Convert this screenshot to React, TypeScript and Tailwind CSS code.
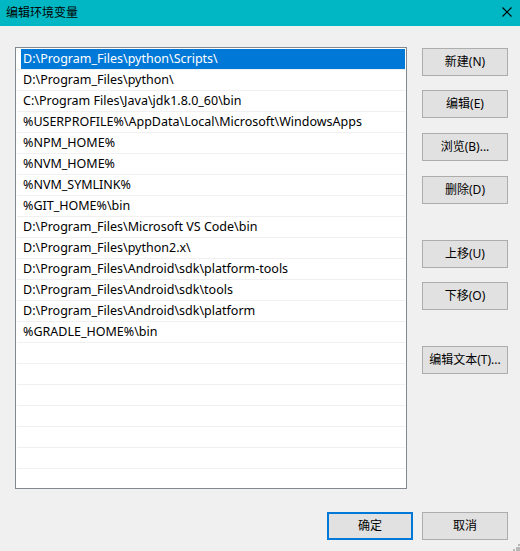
import React from "react";

const items = [
  "D:\\Program_Files\\python\\Scripts\\",
  "D:\\Program_Files\\python\\",
  "C:\\Program Files\\Java\\jdk1.8.0_60\\bin",
  "%USERPROFILE%\\AppData\\Local\\Microsoft\\WindowsApps",
  "%NPM_HOME%",
  "%NVM_HOME%",
  "%NVM_SYMLINK%",
  "%GIT_HOME%\\bin",
  "D:\\Program_Files\\Microsoft VS Code\\bin",
  "D:\\Program_Files\\python2.x\\",
  "D:\\Program_Files\\Android\\sdk\\platform-tools",
  "D:\\Program_Files\\Android\\sdk\\tools",
  "D:\\Program_Files\\Android\\sdk\\platform",
  "%GRADLE_HOME%\\bin",
];

const rows = [...items, ...Array(7).fill("")];

const font = { fontFamily: '"Noto Sans", "Noto Sans CJK SC", sans-serif' };

function Btn({ label, className = "", primary = false }: { label: string; className?: string; primary?: boolean }) {
  return (
    <div
      className={
        "w-[86px] h-[28px] flex items-center justify-center bg-[#e1e1e1] text-[12px] text-black " +
        (primary ? "border-2 border-[#0078d7] " : "border border-[#adadad] ") +
        className
      }
    >
      {label}
    </div>
  );
}

export default function App() {
  return (
    <div className="relative w-[520px] h-[551px] bg-[#f0f0f0] flex flex-col overflow-hidden" style={font}>
      <div className="h-[26px] bg-[#00b7c3] flex items-center justify-between pl-[6px] pr-[8px]">
        <span className="text-[12px] text-black">编辑环境变量</span>
        <svg width="10" height="10" viewBox="0 0 10 10" className="mb-[2px]">
          <path d="M0.5 0.5 L9.5 9.5 M9.5 0.5 L0.5 9.5" stroke="#000" strokeWidth="1.1" />
        </svg>
      </div>
      <div className="flex pt-[21px] pl-[15px]">
        <div className="w-[392px] h-[442px] border border-[#828790] bg-white p-[1px] overflow-hidden">
          {rows.map((t, i) => (
            <div key={i} className="h-[21px] pl-[1px] border-b border-[#f0f0f0] flex">
              <div
                className={
                  "flex-1 ml-[3px] h-[20px] flex items-center pl-[2px] text-[12.5px] whitespace-nowrap " +
                  (i === 0 ? "bg-[#0078d7] text-white" : "text-black")
                }
              >
                {t}
              </div>
            </div>
          ))}
        </div>
        <div className="ml-[15px] pt-[1px] flex flex-col">
          <Btn label="新建(N)" />
          <Btn label="编辑(E)" className="mt-[14px]" />
          <Btn label="浏览(B)..." className="mt-[15px]" />
          <Btn label="删除(D)" className="mt-[15px]" />
          <Btn label="上移(U)" className="mt-[36px]" />
          <Btn label="下移(O)" className="mt-[14px]" />
          <Btn label="编辑文本(T)..." className="mt-[36px]" />
        </div>
      </div>
      <div className="flex justify-end gap-[9px] pr-[12px] mt-[23px]">
        <Btn label="确定" primary />
        <Btn label="取消" />
      </div>
      <svg width="10" height="10" viewBox="0 0 10 10" className="absolute right-0 bottom-0">
        <rect x="6" y="6" width="2" height="2" fill="#b8b8b8" />
        <rect x="3" y="8" width="2" height="2" fill="#b8b8b8" />
        <rect x="6" y="8" width="2" height="2" fill="#b8b8b8" />
        <rect x="8" y="3" width="2" height="2" fill="#b8b8b8" />
        <rect x="8" y="6" width="2" height="2" fill="#b8b8b8" />
        <rect x="8" y="8" width="2" height="2" fill="#b8b8b8" />
      </svg>
    </div>
  );
}
